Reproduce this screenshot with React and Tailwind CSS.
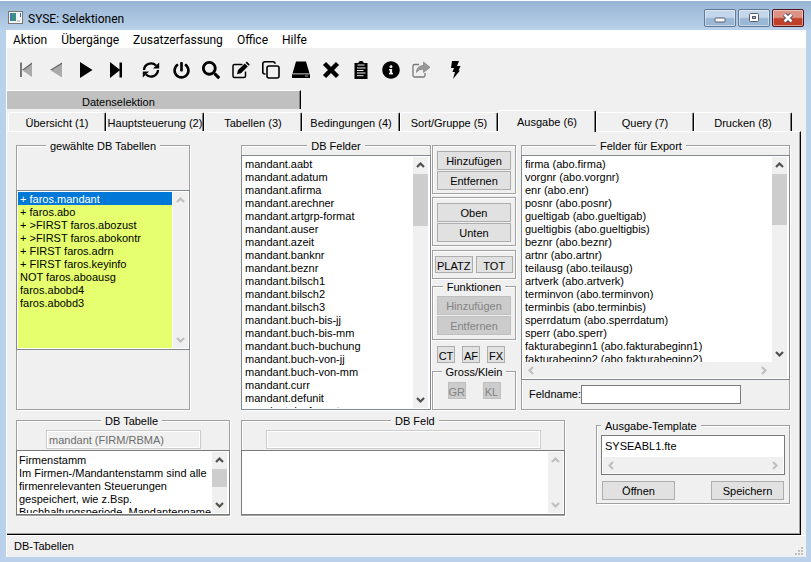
import React, { useState } from "react";
import { FaPowerOff, FaSearch, FaInfoCircle } from "react-icons/fa";

const menuItems = ["Aktion", "Übergänge", "Zusatzerfassung", "Office", "Hilfe"];

const tabs = [
    "Übersicht (1)",
    "Hauptsteuerung (2)",
    "Tabellen (3)",
    "Bedingungen (4)",
    "Sort/Gruppe (5)",
    "Ausgabe (6)",
    "Query (7)",
    "Drucken (8)",
];

const tables = [
    "+ faros.mandant",
    "+ faros.abo",
    "+ >FIRST faros.abozust",
    "+ >FIRST faros.abokontr",
    "+ FIRST faros.adrn",
    "+ FIRST faros.keyinfo",
    "NOT faros.aboausg",
    "faros.abobd4",
    "faros.abobd3",
];

const fields = [
    "mandant.aabt",
    "mandant.adatum",
    "mandant.afirma",
    "mandant.arechner",
    "mandant.artgrp-format",
    "mandant.auser",
    "mandant.azeit",
    "mandant.banknr",
    "mandant.beznr",
    "mandant.bilsch1",
    "mandant.bilsch2",
    "mandant.bilsch3",
    "mandant.buch-bis-jj",
    "mandant.buch-bis-mm",
    "mandant.buch-buchung",
    "mandant.buch-von-jj",
    "mandant.buch-von-mm",
    "mandant.curr",
    "mandant.defunit",
    "mandant.dezformat",
];

const exportFields = [
    "firma (abo.firma)",
    "vorgnr (abo.vorgnr)",
    "enr (abo.enr)",
    "posnr (abo.posnr)",
    "gueltigab (abo.gueltigab)",
    "gueltigbis (abo.gueltigbis)",
    "beznr (abo.beznr)",
    "artnr (abo.artnr)",
    "teilausg (abo.teilausg)",
    "artverk (abo.artverk)",
    "terminvon (abo.terminvon)",
    "terminbis (abo.terminbis)",
    "sperrdatum (abo.sperrdatum)",
    "sperr (abo.sperr)",
    "fakturabeginn1 (abo.fakturabeginn1)",
    "fakturabeginn2 (abo.fakturabeginn2)",
];

const description =
    "Firmenstamm\nIm Firmen-/Mandantenstamm sind alle\nfirmenrelevanten Steuerungen\ngespeichert, wie z.Bsp.\nBuchhaltungsperiode, Mandantenname";

const Icon = ({ children, className = "" }) => (
    <svg viewBox="0 0 18 18" className={`size-[18px] ${className}`} fill="currentColor">
        {children}
    </svg>
);

const toolGroups = [
    [
        {
            label: "Erster",
            disabled: true,
            icon: (
                <Icon>
                    <rect x="3" y="1.500" width="2" height="14.500" fill="#777" />
                    <path d="M15 1.500V16L5 9z" fill="#aaa" />
                    <path d="M15 1.500v1.500L7 9 5 9z" fill="#666" />
                </Icon>
            ),
        },
        {
            label: "Zurück",
            disabled: true,
            icon: (
                <Icon>
                    <path d="M15 1.500V16.500L3 9z" fill="#aaa" />
                    <path d="M15 1.500v1.500L5 9 3 9z" fill="#666" />
                </Icon>
            ),
        },
        { label: "Weiter", icon: <Icon><path d="M3 1v16L15.500 9z" /></Icon> },
        {
            label: "Letzter",
            icon: (
                <Icon>
                    <path d="M3 1v16L12.500 9.500V16.500H15V1.500h-2.500v7z" />
                </Icon>
            ),
        },
    ],
    [
        {
            label: "Aktualisieren",
            icon: (
                <Icon>
                    <path
                        d="M2 9A7 6.800 0 0 1 14 4.500M16 9A7 6.800 0 0 1 4 13.500"
                        fill="none"
                        stroke="currentColor"
                        strokeWidth="2.400"
                    />
                    <path d="M17.200 1.500v6h-6.200zM.800 16.500v-6H7z" />
                </Icon>
            ),
        },
        { label: "Beenden", icon: <FaPowerOff size={17} /> },
        { label: "Suchen", icon: <FaSearch size={18} /> },
        {
            label: "Bearbeiten",
            icon: (
                <Icon>
                    <path
                        d="M10.500 3.500H2.500A1.500 1.500 0 0 0 1 5v10A1.500 1.500 0 0 0 2.500 16.500h9.500A1.500 1.500 0 0 0 13.500 15v-4.500"
                        fill="none"
                        stroke="currentColor"
                        strokeWidth="1.500"
                    />
                    <path d="M5 13.200l1-4.200L12.800 2.500l3 3L9 12.200zM13.600 1.800l1.200-1.200 3 3-1.200 1.200z" />
                </Icon>
            ),
        },
        {
            label: "Kopieren",
            icon: (
                <Icon>
                    <rect x="5" y="5" width="12" height="12" rx="2" fill="none" stroke="currentColor" strokeWidth="1.600" />
                    <path
                        d="M3.500 13h-.700A2 2 0 0 1 .800 11V2.800a2 2 0 0 1 2-2H11a2 2 0 0 1 2 2"
                        fill="none"
                        stroke="currentColor"
                        strokeWidth="1.600"
                    />
                </Icon>
            ),
        },
        {
            label: "Speichern",
            icon: (
                <Icon>
                    <path d="M4 .500h10l3.500 12H.500zM0 13.300h18V17H0z" />
                    <path d="M.500 12.900h17" stroke="#888" strokeWidth=".700" />
                    <rect x="13" y="14.500" width="3" height="1" fill="#aaa" />
                </Icon>
            ),
        },
        {
            label: "Löschen",
            icon: (
                <Icon>
                    <path d="M2.500 2.500l13 13M15.500 2.500l-13 13" stroke="currentColor" strokeWidth="4.400" />
                </Icon>
            ),
        },
        {
            label: "Protokoll",
            icon: (
                <Icon>
                    <path d="M2.500 2H6.500V1L8 0h2l1.500 1v1h4V18h-13z" />
                    <path d="M5.500 4h7M5 7h8.500M5 9.500h6.500M5 12h8.500M5 14.700h6.500" stroke="#eee" strokeWidth="1" />
                </Icon>
            ),
        },
        { label: "Info", icon: <FaInfoCircle size={18} /> },
        {
            label: "Senden",
            disabled: true,
            icon: (
                <Icon>
                    <path
                        d="M7 3.500H2.500A1.500 1.500 0 0 0 1 5v9.500A1.500 1.500 0 0 0 2.500 16h9a1.500 1.500 0 0 0 1.500-1.500V12"
                        fill="none"
                        stroke="#777"
                        strokeWidth="1.300"
                    />
                    <path d="M4.500 11.500C4.500 7 7 4.500 11.500 4.500V1L18 6.300l-6.500 5.200V8.300c-3.500 0-5.500.700-7 3.200z" fill="#999" stroke="#666" strokeWidth=".500" />
                </Icon>
            ),
        },
    ],
    [
        {
            label: "Ausführen",
            icon: (
                <Icon>
                    <path d="M5 0h7L10 5h3.500L11.500 9.500h1.500L6 18l2-7H5.500L7 7H4z" />
                </Icon>
            ),
        },
    ],
];

const Chevron = ({ direction, muted }) => {
    const paths = {
        up: "M1 6l3.500-3.500L8 6",
        down: "M1 3l3.500 3.500L8 3",
        left: "M6 1L2.500 4.500 6 8",
        right: "M3 1l3.500 3.500L3 8",
    };
    return (
        <svg viewBox="0 0 9 9" className={`size-[9px] ${muted ? "text-[#bfbfbf]" : "text-[#505050]"}`}>
            <path d={paths[direction]} fill="none" stroke="currentColor" strokeWidth="2.200" />
        </svg>
    );
};

const VerticalScroll = ({ muted, thumb }) => (
    <div className="flex w-[15px] shrink-0 flex-col bg-[#f0f0f0]">
        <button aria-label="Nach oben" className="flex h-[17px] items-center justify-center">
            <Chevron direction="up" muted={muted} />
        </button>
        <div className="flex-1">{thumb && <div className={`bg-[#cdcdcd] ${thumb}`} />}</div>
        <button aria-label="Nach unten" className="flex h-[17px] items-center justify-center">
            <Chevron direction="down" muted={muted} />
        </button>
    </div>
);

const HorizontalScroll = ({ className = "" }) => (
    <div className={`flex h-4 shrink-0 justify-between bg-[#f0f0f0] ${className}`}>
        <button aria-label="Nach links" className="flex w-[17px] items-center justify-center">
            <Chevron direction="left" muted />
        </button>
        <button aria-label="Nach rechts" className="flex w-[17px] items-center justify-center">
            <Chevron direction="right" muted />
        </button>
    </div>
);

const Group = ({ title, legendClass = "mx-auto", className = "", children }) => (
    <fieldset
        className={`min-w-0 border border-[#a0a0a0] shadow-[inset_1px_1px_0_#fff,1px_1px_0_#fff] ${className}`}
    >
        {title && <legend className={`h-[13px] bg-[#f0f0f0] px-1 leading-[15px] ${legendClass}`}>{title}</legend>}
        {children}
    </fieldset>
);

const PushButton = ({ className = "h-[19px] w-full", disabled, children }) => (
    <button
        disabled={disabled}
        className={`border pt-px text-center leading-4 ${disabled
            ? "border-[#bfbfbf] bg-[#cccccc] text-[#838383]"
            : "border-[#adadad] bg-[#e1e1e1] hover:border-[#0078d7] hover:bg-[#e5f1fb]"
            } ${className}`}
    >
        {children}
    </button>
);

const ListBox = ({ label, items, selected, onSelect, className = "" }) => (
    <ul role="listbox" aria-label={label} className={`min-w-0 flex-1 overflow-hidden ${className}`}>
        {items.map((item) => (
            <li
                key={item}
                role="option"
                aria-selected={selected === item}
                onClick={() => onSelect(item)}
                className={`h-[13px] whitespace-nowrap pl-[2px] leading-[15px] ${selected === item ? "bg-[#0078d7] text-white" : ""}`}
            >
                {item}
            </li>
        ))}
    </ul>
);

const TitleBar = () => {
    const box = "flex h-[18px] w-8 items-center justify-center rounded-[2px] border shadow-[inset_0_0_0_1px_rgba(255,255,255,0.45)]";
    const blue = "border-[#5f7896] bg-linear-to-b from-[#c3d6ea] from-45% to-[#9ab7d6] to-55%";
    return (
        <header className="flex h-[30px] items-start border-t border-white bg-linear-to-b from-[#97b4d3] to-[#b9d1ea] pt-2 pr-[7px] pl-2">
            <svg viewBox="0 0 15 13" className="mt-[2px] h-[13px] w-[15px]">
                <rect x=".500" y=".500" width="14" height="12" fill="#f4f4f4" stroke="#777" />
                <rect x="2" y="2" width="6" height="8" fill="#3b8f86" />
                <rect x="2" y="2" width="2" height="8" fill="#3f78b5" />
                <rect x="9" y="9" width="3" height="2" fill="#ccc" />
                <rect x="12" y="2" width="1" height="4" fill="#2b6fa5" />
            </svg>
            <h1 className="ml-[5px] flex-1 font-[Roboto,sans-serif] text-[12px] leading-[20px]">SYSE: Selektionen</h1>
            <div className="flex gap-[2px]">
                <button aria-label="Minimieren" className={`${box} ${blue}`}>
                    <svg viewBox="0 0 12 6" className="mt-[3px] h-[6px] w-3">
                        <rect x="1" y="1" width="10" height="4" rx="1" fill="#fff" stroke="#5b5b6b" />
                    </svg>
                </button>
                <button aria-label="Maximieren" className={`${box} ${blue}`}>
                    <svg viewBox="0 0 12 10" className="h-[10px] w-3">
                        <rect x="1.500" y=".500" width="9" height="8" rx="1" fill="#fff" stroke="#5b5b6b" />
                        <rect x="4.500" y="3.500" width="3" height="2" fill="#9ab7d6" stroke="#5b5b6b" />
                    </svg>
                </button>
                <button
                    aria-label="Schließen"
                    className={`${box} border-[#4a1620] bg-linear-to-b from-[#dd9286] from-45% to-[#c0402a] to-55%`}
                >
                    <svg viewBox="0 0 12 10" className="h-[10px] w-3">
                        <path d="M2.500 1.500l7 7M9.500 1.500l-7 7" stroke="#5b4550" strokeWidth="4.500" />
                        <path d="M2.500 1.500l7 7M9.500 1.500l-7 7" stroke="#fff" strokeWidth="2.500" />
                    </svg>
                </button>
            </div>
        </header>
    );
};

const App = () => {
    const [activeTab, setActiveTab] = useState("Ausgabe (6)");
    const [table, setTable] = useState("+ faros.mandant");
    const [field, setField] = useState("");
    const [exportField, setExportField] = useState("");

    return (
        <div className="flex min-h-screen flex-col bg-[#b9d1ea] font-['Liberation_Sans',sans-serif] text-[11px] leading-[13px] text-black">
            <TitleBar />
            <div className="mr-[5px] mb-[5px] ml-[6px] flex flex-1 flex-col border-l border-white bg-[#f0f0f0]">
                <nav className="flex h-[18px] gap-[14px] bg-white pl-[6px] font-[Roboto,sans-serif] text-[12px] leading-[20px]">
                    {menuItems.map((item) => (
                        <button key={item}>{item}</button>
                    ))}
                </nav>

                <div className="flex h-[42px] items-center gap-[5px] pt-[2px] pl-1">
                    {toolGroups.map((group, i) => (
                        <div key={i} className="flex">
                            {group.map((tool) => (
                                <button
                                    key={tool.label}
                                    aria-label={tool.label}
                                    disabled={tool.disabled}
                                    className="flex h-6 w-[30px] items-center justify-center"
                                >
                                    {tool.icon}
                                </button>
                            ))}
                        </div>
                    ))}
                </div>

                <div className="h-[19px] w-[294px] border-t border-r border-t-white border-r-black bg-[#c0c0c0] pl-[75px] leading-[22px] shadow-[inset_-1px_0_0_#808080]">
                    Datenselektion
                </div>

                <div role="tablist" className="mt-px mr-[14px] ml-px grid h-[21px] grid-cols-8 items-end">
                    {tabs.map((tab) => (
                        <button
                            key={tab}
                            role="tab"
                            aria-selected={tab === activeTab}
                            onClick={() => setActiveTab(tab)}
                            className={`whitespace-nowrap rounded-t-[2px] border-t border-l border-r border-t-white border-l-white border-r-black bg-[#f0f0f0] pt-[2px] shadow-[inset_-1px_0_0_#808080] ${tab === activeTab ? "relative z-10 -mb-px h-[22px]" : "h-[19px]"
                                }`}
                        >
                            {tab}
                        </button>
                    ))}
                </div>

                <main className="mr-[5px] flex-1 border-t border-t-white border-r border-b border-r-black border-b-black pt-[7px] pr-[10px] pb-[17px] pl-[9px] shadow-[inset_-1px_-1px_0_#a0a0a0]">
                    <div className="flex">
                        <Group title="gewählte DB Tabellen" className="w-[174px]">
                            <div className="-mx-px mt-[38px] flex h-[160px] border border-[#828790] bg-white p-px">
                                <ListBox
                                    label="gewählte DB Tabellen"
                                    items={tables}
                                    selected={table}
                                    onSelect={setTable}
                                    className="bg-[#e6ff6e]"
                                />
                                <div className="ml-px flex">
                                    <VerticalScroll muted />
                                </div>
                            </div>
                        </Group>

                        <Group title="DB Felder" className="ml-[51px] w-[190px]">
                            <div className="-mx-px -mb-px mt-[3px] flex h-[255px] border border-[#828790] bg-white p-px pr-[2px]">
                                <ListBox
                                    label="DB Felder"
                                    items={fields}
                                    selected={field}
                                    onSelect={setField}
                                />
                                <VerticalScroll thumb="h-[52px]" />
                            </div>
                        </Group>

                        <div className="mt-[6px] ml-px flex w-[84px] flex-col">
                            <Group className="flex h-[49px] flex-col gap-px px-1 pt-[5px]">
                                <PushButton>Hinzufügen</PushButton>
                                <PushButton>Entfernen</PushButton>
                            </Group>
                            <Group className="mt-[3px] flex h-[49px] flex-col gap-px px-1 pt-[5px]">
                                <PushButton>Oben</PushButton>
                                <PushButton>Unten</PushButton>
                            </Group>
                            <Group className="mt-1 flex h-[29px] gap-[3px] px-[2px] pt-[5px]">
                                <PushButton className="h-[17px] flex-1">PLATZ</PushButton>
                                <PushButton className="h-[17px] flex-1">TOT</PushButton>
                            </Group>
                            <Group title="Funktionen" className="mt-px h-[60px] px-1">
                                <div className="flex flex-col gap-px pt-[3px]">
                                    <PushButton disabled>Hinzufügen</PushButton>
                                    <PushButton disabled>Entfernen</PushButton>
                                </div>
                            </Group>
                            <div className="mt-[6px] flex gap-[7px] pl-[5px]">
                                <PushButton className="h-[17px] w-[18px]">CT</PushButton>
                                <PushButton className="h-[17px] w-[18px]">AF</PushButton>
                                <PushButton className="h-[17px] w-[18px]">FX</PushButton>
                            </div>
                            <Group title="Gross/Klein" className="mt-[2px] flex-1">
                                <div className="flex justify-center gap-[17px] pt-1">
                                    <PushButton disabled className="h-[17px] w-[18px]">GR</PushButton>
                                    <PushButton disabled className="h-[17px] w-[18px]">KL</PushButton>
                                </div>
                            </Group>
                        </div>

                        <Group title="Felder für Export" legendClass="ml-[74px]" className="ml-[5px] flex-1">
                            <div className="-mx-px mt-[3px] flex h-[225px] flex-col border border-[#828790] bg-white p-px pr-[2px]">
                                <div className="flex min-h-0 flex-1">
                                    <ListBox
                                        label="Felder für Export"
                                        items={exportFields}
                                        selected={exportField}
                                        onSelect={setExportField}
                                    />
                                    <VerticalScroll thumb="h-[51px]" />
                                </div>
                                <HorizontalScroll className="pr-[15px]" />
                            </div>
                            <div className="mt-[5px] flex items-center pl-[7px]">
                                <label htmlFor="feldname">Feldname:</label>
                                <input id="feldname" className="h-[19px] w-[160px] border border-[#7a7a7a] bg-white px-1" />
                            </div>
                        </Group>
                    </div>

                    <div className="mt-1 flex items-start">
                        <Group title="DB Tabelle" legendClass="ml-[84px]" className="w-[214px]">
                            <input
                                aria-label="DB Tabelle"
                                disabled
                                defaultValue="mandant (FIRM/RBMA)"
                                className="mt-[3px] ml-[29px] block h-[19px] w-[155px] border border-[#cccccc] px-[2px] text-[#6d6d6d] shadow-[inset_0_0_0_1px_#fff]"
                            />
                            <div className="-mx-px mt-px flex h-[65px] border border-[#7a7a7a] bg-white p-px pr-[2px]">
                                <textarea
                                    aria-label="Beschreibung der Tabelle"
                                    readOnly
                                    wrap="off"
                                    defaultValue={description}
                                    className="min-w-0 flex-1 resize-none overflow-hidden pt-[2px] pl-px leading-[13px]"
                                />
                                <VerticalScroll thumb="h-[18px]" />
                            </div>
                        </Group>

                        <Group title="DB Feld" legendClass="ml-[149px]" className="ml-[11px] flex-1">
                            <input
                                aria-label="DB Feld"
                                disabled
                                className="mx-6 mt-[3px] block h-[19px] w-[275px] border border-[#cccccc] shadow-[inset_0_0_0_1px_#fff]"
                            />
                            <div className="-mx-px mt-px flex h-[65px] border border-[#7a7a7a] bg-white p-px">
                                <textarea
                                    aria-label="Beschreibung des Feldes"
                                    readOnly
                                    className="min-w-0 flex-1 resize-none overflow-hidden pl-px leading-[13px]"
                                />
                                <VerticalScroll muted />
                            </div>
                        </Group>

                        <Group title="Ausgabe-Template" legendClass="ml-0" className="mt-[5px] ml-[31px] w-[194px] px-1 pb-[3px]">
                            <div className="mt-[3px] border border-[#7a7a7a] bg-white p-px">
                                <input
                                    aria-label="Ausgabe-Template"
                                    defaultValue="SYSEABL1.fte"
                                    className="block h-5 w-full px-[2px] pb-[2px]"
                                />
                                <HorizontalScroll />
                            </div>
                            <div className="mt-[6px] flex justify-between px-px">
                                <PushButton className="h-[19px] w-[73px]">Öffnen</PushButton>
                                <PushButton className="h-[19px] w-[73px]">Speichern</PushButton>
                            </div>
                        </Group>
                    </div>
                </main>

                <footer className="flex h-[22px] items-center justify-between border-t border-white pr-[3px] pl-[7px]">
                    <span>DB-Tabellen</span>
                    <svg viewBox="0 0 8 8" className="mb-[2px] size-2 self-end" fill="#bfbfbf">
                        <path d="M6 0h2v2H6zM6 3h2v2H6zM3 3h2v2H3zM6 6h2v2H6zM3 6h2v2H3zM0 6h2v2H0z" />
                    </svg>
                </footer>
            </div>
        </div>
    );
};

export default App;
